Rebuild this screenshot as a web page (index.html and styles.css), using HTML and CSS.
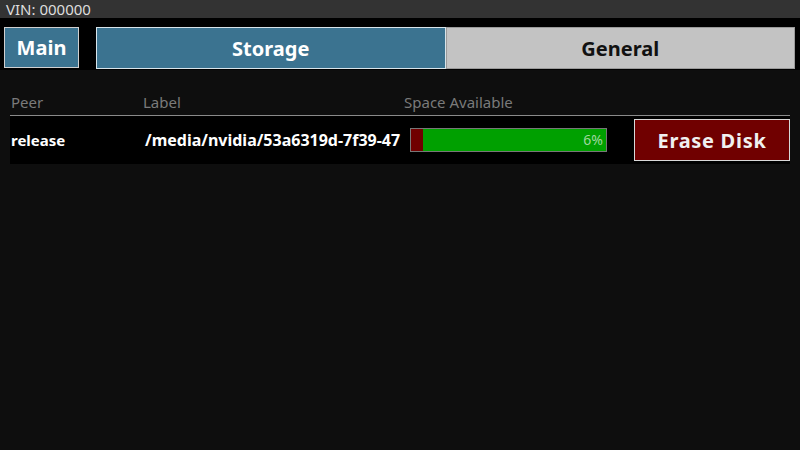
FILE: index.html
```html
<!DOCTYPE html>
<html lang="en">
<head>
    <meta charset="UTF-8">
    <title>Storage</title>

    <link rel="stylesheet" href="styles.css">
</head>
<body>
    <div id="status">VIN: 000000</div>

    <div id="nav">
        <button class="main-btn">Main</button>
        <div id="tabs">
            <button class="tab active">Storage</button>
            <button class="tab">General</button>
        </div>
    </div>

    <div id="storage">
        <div class="row head">
            <div>Peer</div>
            <div>Label</div>
            <div>Space Available</div>
            <div></div>
        </div>
        <div class="row disk">
            <div class="peer">release</div>
            <div class="label">/media/nvidia/53a6319d-7f39-47</div>
            <div class="space">
                <div class="bar">
                    <div class="used" style="width: 6%"></div>
                    <span>6%</span>
                </div>
            </div>
            <div class="action">
                <button class="erase">Erase Disk</button>
            </div>
        </div>
    </div>
</body>
</html>
```

FILE: styles.css
```css
html, body {
    margin: 0;
}

body {
    background-color: #0e0e0e;
    font-family: 'Noto Sans', sans-serif;
    color: #fff;
    height: 450px;
    overflow: hidden;
}

button {
    font-family: inherit;
    font-weight: bold;
    cursor: pointer;
    margin: 0;
    padding: 0;
}

#status {
    background: #333;
    color: #ddd;
    font-size: 15px;
    height: 18px;
    line-height: 18px;
    padding-left: 6px;
}

#nav {
    background: #000;
    display: flex;
    align-items: flex-start;
    gap: 17px;
    padding: 9px 5px 0 4px;
    height: 52px;
    box-sizing: border-box;
}

.main-btn {
    width: 75px;
    height: 41px;
    background: #3b7390;
    border: 1px solid #d0d0d0;
    color: #fff;
    font-size: 20px;
}

#tabs {
    flex-grow: 1;
    display: flex;
}

.tab {
    flex: 1;
    height: 42px;
    background: #c3c3c3;
    border: 1px solid #9a9a9a;
    color: #111;
    font-size: 20px;
}

.tab.active {
    background: #3b7390;
    border-color: #d8e4ea;
    color: #fff;
}

#storage {
    margin: 0 10px;
    padding-top: 23px;
}

.row {
    display: grid;
    grid-template-columns: 133px 261px 230px 1fr;
}

.head {
    color: #7a7a7a;
    font-size: 15px;
    line-height: 18px;
    padding-bottom: 4px;
    border-bottom: 1px solid #8a8a8a;
}

.head > div:first-child {
    padding-left: 1px;
}

.disk {
    background: #000;
    height: 48px;
    align-items: center;
    font-weight: bold;
    font-size: 15px;
}

.disk .peer {
    padding-left: 1px;
}

.disk .label {
    font-size: 16px;
    padding-left: 2px;
    white-space: nowrap;
    overflow: hidden;
}

.space {
    padding-left: 6px;
}

.bar {
    position: relative;
    width: 197px;
    height: 24px;
    box-sizing: border-box;
    border: 1px solid #777;
    background: #00a000;
}

.used {
    height: 100%;
    background: #700000;
}

.bar span {
    position: absolute;
    right: 3px;
    top: 1px;
    font-size: 14px;
    font-weight: normal;
    color: #9fd79f;
}

.action {
    display: flex;
    justify-content: flex-end;
}

.erase {
    width: 156px;
    height: 42px;
    background: #700000;
    border: 1px solid #d8d8d8;
    color: #f0f0f0;
    font-size: 20px;
    letter-spacing: 0.7px;
}
```
